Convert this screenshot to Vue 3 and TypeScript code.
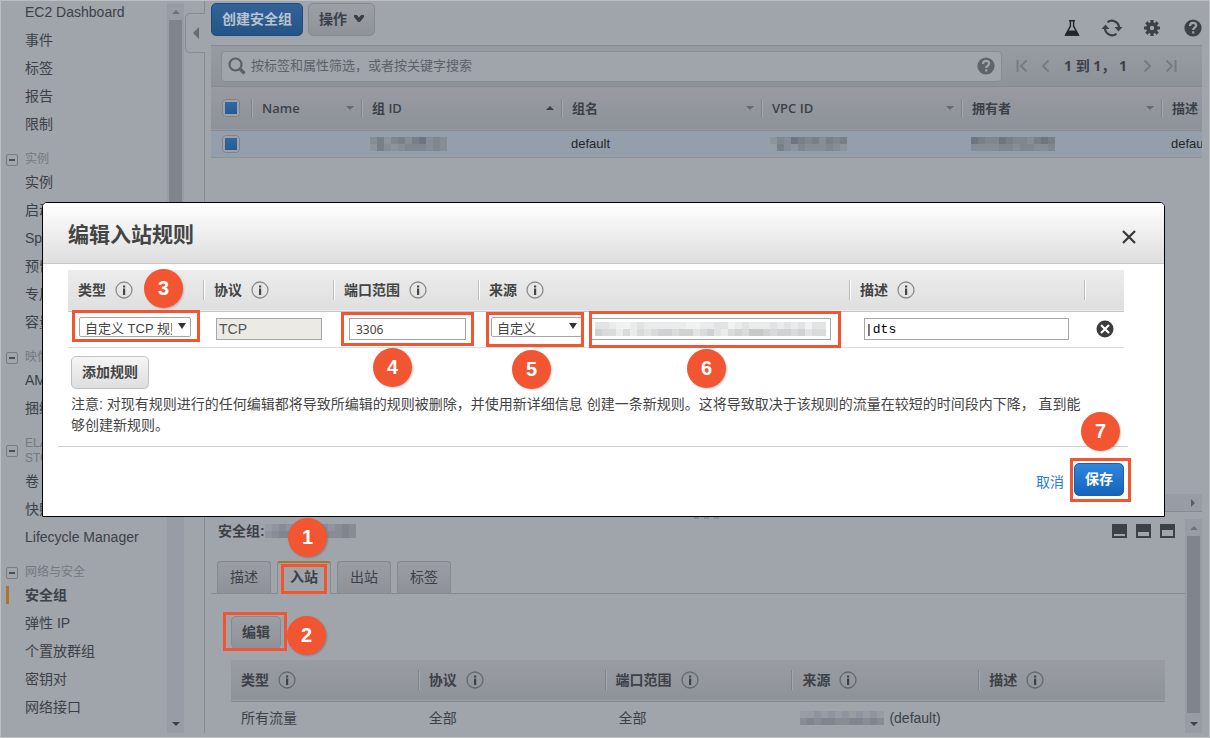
<script setup lang="ts">
import { h, ref, type FunctionalComponent } from 'vue'

interface NavGroup { title: string; items: string[] }

const topItems: string[] = ['EC2 Dashboard', '事件', '标签', '报告', '限制']
const groups: NavGroup[] = [
  { title: '实例', items: ['实例', '启动模板', 'Spot 请求', '预留实例', '专用主机', '容量预留'] },
  { title: '映像', items: ['AMI', '捆绑任务'] },
  { title: 'ELASTIC BLOCK STORE', items: ['卷', '快照', 'Lifecycle Manager'] },
  { title: '网络与安全', items: ['安全组', '弹性 IP', '个置放群组', '密钥对', '网络接口'] },
]
const activeItem = ref('安全组')

const columns = [
  { label: 'Name', sort: 'down' },
  { label: '组 ID', sort: 'up' },
  { label: '组名', sort: 'down' },
  { label: 'VPC ID', sort: 'down' },
  { label: '拥有者', sort: 'down' },
  { label: '描述', sort: '' },
]
const tabs = ['描述', '入站', '出站', '标签']
const activeTab = ref('入站')
const ruleColumns = ['类型', '协议', '端口范围', '来源', '描述']

const port = ref('3306')
const description = ref('|dts')

/* Redacted values: each digit picks a shade, each cell is a 7px square. */
const darkShades = ['#949ea9', '#8c959f', '#858e98', '#7e8790', '#777f89', '#6e7480']
const greyShades = ['#a0a4ab', '#989ca3', '#9094a0', '#888d94', '#81868e', '#797e88']
const lightShades = ['#f2f2f2', '#eaebeb', '#e2e3e4', '#d9dada', '#d0d1d2', '#c7c7c8']

const Mosaic: FunctionalComponent<{ rows: string[]; shades: string[] }> = (props) => {
  const width = props.rows[0].length * 7
  const height = props.rows.length * 7
  return h(
    'svg',
    { width, height, viewBox: `0 0 ${width} ${height}`, 'shape-rendering': 'crispEdges', 'aria-hidden': 'true' },
    props.rows.flatMap((row, y) =>
      [...row].map((c, x) => h('rect', { x: x * 7, y: y * 7, width: 7, height: 7, fill: props.shades[Number(c)] })),
    ),
  )
}
Mosaic.props = ['rows', 'shades']

const idRows = ['24134245232', '14212333232']
const vpcRows = ['13254342434', '04213222321']
const ownerRows = ['543354332454', '222233233223']
const detailRows = ['1232334332343', '2344333323343']
const sourceRows = ['112121212121', '343443344343']
const addressRows = ['221001211111100112201211121212022', '433131323443442342134355434434233']
</script>

<template>
  <div class="console">
    <svg class="defs" aria-hidden="true">
      <symbol id="i-info" viewBox="0 0 18 18">
        <circle cx="9" cy="9" r="8" fill="none" stroke="currentColor" stroke-opacity="0.55" stroke-width="1.3" />
        <path d="M8 4.500h2.200v2H8zM8 7.500h2.200v6.500H8z" fill="currentColor" />
      </symbol>
      <symbol id="i-help" viewBox="0 0 18 18">
        <circle cx="9" cy="9" r="8.6" fill="currentColor" />
        <path d="M6 7c0-4 6.200-4 6.200-.6 0 2.200-3 2.200-3 4.600" fill="none" stroke="#a0a4ab" stroke-width="2.2" />
        <path d="M8.100 12.300h2.200v2.200H8.100z" fill="#a0a4ab" />
      </symbol>
    </svg>

    <nav class="sidebar">
      <a v-for="item in topItems" :key="item" href="#" class="nav-item">{{ item }}</a>
      <template v-for="g in groups" :key="g.title">
        <h2 class="nav-title">
          <button class="fold" type="button" :aria-label="'折叠 ' + g.title"></button>
          <span>{{ g.title }}</span>
        </h2>
        <a
          v-for="item in g.items"
          :key="item"
          href="#"
          class="nav-item"
          :class="{ active: item === activeItem }"
          @click.prevent="activeItem = item"
        >{{ item }}</a>
      </template>
    </nav>

    <div class="scroll side-scroll">
      <i class="tri up dim"></i>
      <div class="thumb"></div>
      <i class="tri down"></i>
    </div>

    <div class="gutter">
      <button class="collapse" type="button" aria-label="收起导航"><i class="tri left"></i></button>
    </div>

    <main class="main">
      <section class="upper">
        <header class="toolbar">
          <button class="btn primary" type="button">创建安全组</button>
          <button class="btn" type="button">
            操作
            <svg width="10" height="8" viewBox="0 0 10 8"><path d="M0 0h3l2 2.500L7 0h3v2L6 7H4L0 2z" fill="#3c4148" /></svg>
          </button>
          <div class="tools">
            <button class="tool" type="button" aria-label="实验">
              <svg width="18" height="18" viewBox="0 0 18 18">
                <path d="M6 1.700h6M7.400 1.700v5.500L2.600 16h12.800L10.600 7.200V1.700" fill="none" stroke="#23272c" stroke-width="1.400" />
                <path d="M4.700 11.500h8.600l3 5.200H1.700z" fill="#23272c" />
              </svg>
            </button>
            <button class="tool" type="button" aria-label="刷新">
              <svg width="22" height="18" viewBox="0 0 22 18">
                <path d="M6.500 3.200A7.200 7.200 0 0 1 18 9M15.500 14.800A7.200 7.200 0 0 1 4 9" fill="none" stroke="#3c4148" stroke-width="2.300" />
                <path d="M13.500 8h8l-4 4.500zM.5 10h8L4.500 5.500z" fill="#3c4148" />
              </svg>
            </button>
            <button class="tool" type="button" aria-label="设置">
              <svg width="18" height="18" viewBox="0 0 18 18">
                <circle cx="9" cy="9" r="4" fill="none" stroke="#3c4148" stroke-width="3.600" />
                <path d="M9 1v3M9 14v3M1 9h3M14 9h3M3.300 3.300l2.200 2.200M12.500 12.500l2.200 2.200M3.300 14.700l2.200-2.200M12.500 5.500l2.200-2.200" stroke="#3c4148" stroke-width="3.200" />
              </svg>
            </button>
            <button class="tool" type="button" aria-label="帮助">
              <svg width="18" height="18"><use href="#i-help" /></svg>
            </button>
          </div>
        </header>

        <div class="filter">
          <div class="search">
            <svg width="18" height="18" viewBox="0 0 18 18">
              <circle cx="7.500" cy="7.500" r="6" fill="none" stroke="#5c6168" stroke-width="2.200" />
              <path d="M11.500 11.500l5 5" stroke="#5c6168" stroke-width="3.200" />
            </svg>
            <input type="text" aria-label="筛选" placeholder="按标签和属性筛选，或者按关键字搜索" />
            <svg class="search-help" width="18" height="18"><use href="#i-help" /></svg>
          </div>
          <div class="pager">
            <button type="button" aria-label="第一页"><svg width="12" height="14" viewBox="0 0 12 14"><path d="M1.500 1v12M10.500 1.500L5 7l5.500 5.500" /></svg></button>
            <button type="button" aria-label="上一页"><svg width="12" height="14" viewBox="0 0 12 14"><path d="M8.500 1.500L3 7l5.500 5.500" /></svg></button>
            <strong>1 到 1， 1</strong>
            <button type="button" aria-label="下一页"><svg width="12" height="14" viewBox="0 0 12 14"><path d="M3.500 1.500L9 7l-5.500 5.500" /></svg></button>
            <button type="button" aria-label="最后一页"><svg width="12" height="14" viewBox="0 0 12 14"><path d="M10.500 1v12M1.500 1.500L7 7l-5.500 5.500" /></svg></button>
          </div>
        </div>

        <div class="grid-wrap">
          <table class="grid">
            <colgroup>
              <col class="c-check" /><col class="c-name" /><col /><col /><col /><col /><col />
            </colgroup>
            <thead>
              <tr>
                <th><input class="check" type="checkbox" aria-label="全选" checked /></th>
                <th v-for="c in columns" :key="c.label">
                  <div class="th">{{ c.label }}<i v-if="c.sort" class="tri" :class="[c.sort, { dim: c.sort === 'down' }]"></i></div>
                </th>
              </tr>
            </thead>
            <tbody>
              <tr>
                <td><input class="check" type="checkbox" aria-label="选择 default" checked /></td>
                <td></td>
                <td><Mosaic :rows="idRows" :shades="darkShades" /></td>
                <td>default</td>
                <td><Mosaic :rows="vpcRows" :shades="darkShades" /></td>
                <td><Mosaic :rows="ownerRows" :shades="darkShades" /></td>
                <td>default VPC security group</td>
              </tr>
            </tbody>
          </table>
        </div>
        <div class="hscroll"><i class="tri right"></i></div>
      </section>

      <section class="details">
        <div class="dots"><i></i><i></i><i></i></div>
        <div class="detail-body">
          <div class="detail-head">
            <strong>安全组:</strong>
            <Mosaic :rows="detailRows" :shades="greyShades" />
            <div class="panes">
              <button class="pane low" type="button" aria-label="最小化"></button>
              <button class="pane mid" type="button" aria-label="一半"></button>
              <button class="pane full" type="button" aria-label="最大化"></button>
            </div>
            <span class="badge b1">1</span>
          </div>
          <div class="tabs">
            <button
              v-for="t in tabs"
              :key="t"
              type="button"
              class="tab"
              :class="{ active: t === activeTab }"
              @click="activeTab = t"
            >{{ t }}<span v-if="t === '入站'" class="frame f1"></span></button>
          </div>
          <div class="edit-wrap">
            <button class="btn edit" type="button">编辑</button>
            <span class="frame f2"></span>
            <span class="badge b2">2</span>
          </div>
          <table class="rules">
            <thead>
              <tr>
                <th v-for="c in ruleColumns" :key="c"><div class="rule-th">{{ c }}<svg width="18" height="18"><use href="#i-info" /></svg></div></th>
              </tr>
            </thead>
            <tbody>
              <tr>
                <td>所有流量</td>
                <td>全部</td>
                <td class="port-cell">全部</td>
                <td class="source-cell"><div><Mosaic :rows="sourceRows" :shades="greyShades" /><span>(default)</span></div></td>
                <td></td>
              </tr>
            </tbody>
          </table>
        </div>
        <div class="scroll">
          <i class="tri up dim"></i>
          <div class="thumb long"></div>
          <i class="tri down"></i>
        </div>
      </section>
    </main>

    <div class="modal" role="dialog" aria-labelledby="modal-title">
      <header class="modal-head">
        <h1 id="modal-title">编辑入站规则</h1>
        <button class="close" type="button" aria-label="关闭">
          <svg width="14" height="14" viewBox="0 0 14 14"><path d="M1 1l12 12M13 1L1 13" stroke="#3a3a3a" stroke-width="2.300" /></svg>
        </button>
      </header>
      <div class="modal-body">
        <table class="edit-rules">
          <colgroup>
            <col class="w-type" /><col class="w-proto" /><col class="w-port" /><col /><col class="w-desc" /><col class="w-del" />
          </colgroup>
          <thead>
            <tr>
              <th v-for="(c, i) in ruleColumns" :id="'col-' + i" :key="c">
                <div class="rule-th">{{ c }}<svg width="18" height="18"><use href="#i-info" /></svg></div>
                <span v-if="i === 0" class="badge b3">3</span>
              </th>
              <th><div class="rule-th"></div></th>
            </tr>
          </thead>
          <tbody>
            <tr>
              <td>
                <div class="field type">
                  <select aria-labelledby="col-0"><option>自定义 TCP 规则</option></select>
                  <i class="caret"></i>
                  <span class="frame f3"></span>
                </div>
              </td>
              <td><div class="field proto"><input type="text" value="TCP" disabled aria-labelledby="col-1" /></div></td>
              <td>
                <div class="field port">
                  <input v-model="port" type="text" aria-labelledby="col-2" />
                  <span class="frame f4"></span>
                  <span class="badge b4">4</span>
                </div>
              </td>
              <td>
                <div class="sources">
                  <div class="field kind">
                    <select aria-labelledby="col-3"><option>自定义</option></select>
                    <i class="caret"></i>
                    <span class="frame f5"></span>
                    <span class="badge b5">5</span>
                  </div>
                  <div class="field address">
                    <input type="text" aria-labelledby="col-3" />
                    <Mosaic class="masked" :rows="addressRows" :shades="lightShades" />
                    <span class="frame f6"></span>
                    <span class="badge b6">6</span>
                  </div>
                </div>
              </td>
              <td><div class="field desc"><input v-model="description" type="text" aria-labelledby="col-4" /></div></td>
              <td>
                <button class="delete" type="button" aria-label="删除规则">
                  <svg width="18" height="18" viewBox="0 0 18 18">
                    <circle cx="9" cy="9" r="8.500" fill="#3c3c3c" />
                    <path d="M5 5l8 8M13 5l-8 8" stroke="#fff" stroke-width="2.200" />
                  </svg>
                </button>
              </td>
            </tr>
          </tbody>
        </table>
        <button class="btn bright add" type="button">添加规则</button>
        <p class="note">注意: 对现有规则进行的任何编辑都将导致所编辑的规则被删除，并使用新详细信息 创建一条新规则。这将导致取决于该规则的流量在较短的时间段内下降， 直到能够创建新规则。</p>
        <footer class="modal-foot">
          <a href="#">取消</a>
          <div class="save-wrap">
            <button class="btn save" type="button">保存</button>
            <span class="frame f7"></span>
            <span class="badge b7">7</span>
          </div>
        </footer>
      </div>
    </div>
  </div>
</template>

<style>
body { margin: 0; }
</style>

<style scoped>
* { box-sizing: border-box; }

.console {
  position: relative;
  display: flex;
  height: 100vh;
  border: 1px solid #bcbebf;
  padding-right: 7px;
  overflow: hidden;
  background: #a0a4ab;
  color: #3c4148;
  font: 14px/20px "Liberation Sans", "Noto Sans CJK SC", sans-serif;
}
.defs { position: absolute; width: 0; height: 0; }
button, input, select { margin: 0; font: inherit; color: inherit; }
button { padding: 0; border: 0; background: none; }
svg { display: block; flex: none; }
table { border-collapse: collapse; border-spacing: 0; table-layout: fixed; }
th, td { padding: 0; text-align: left; }

.tri { width: 0; height: 0; border: 4px solid transparent; flex: none; }
.tri.up { border-top: 0; border-bottom-color: #3c4148; }
.tri.down { border-bottom: 0; border-top-color: #3c4148; }
.tri.left { border: 6px solid transparent; border-left: 0; border-right-color: #666b72; }
.tri.right { border-right: 0; border-left-color: #5a5f66; }
.tri.up.dim { border-bottom-color: #6f747b; }
.tri.down.dim { border-top-color: #666b72; }

/* sidebar */
.sidebar { width: 166px; flex: none; margin-top: -3px; }
.nav-item {
  display: block;
  padding-left: 24px;
  line-height: 28px;
  color: inherit;
  text-decoration: none;
  white-space: nowrap;
}
.nav-item.active { font-weight: bold; position: relative; }
.nav-item.active::before {
  content: "";
  position: absolute;
  left: 5px;
  top: 5px;
  width: 3px;
  height: 18px;
  background: #ab7430;
}
.nav-title {
  display: flex;
  align-items: center;
  gap: 6px;
  margin: 0;
  padding: 14px 40px 1px 5px;
  font-size: 12px;
  font-weight: normal;
  line-height: 15px;
  color: #747980;
}
.fold {
  display: flex;
  align-items: center;
  justify-content: center;
  flex: none;
  width: 12px;
  height: 12px;
  border: 1px solid #777c83;
  border-radius: 2px;
}
.fold::before { content: ""; width: 6px; height: 2px; background: #4b5057; }
.nav-title span { margin-left: 1px; }

.scroll {
  display: flex;
  flex-direction: column;
  align-items: center;
  flex: none;
  width: 17px;
  padding: 7px 0;
  background: #989ca4;
}
.side-scroll { margin: 2px 0 4px; }
.thumb { width: 13px; height: 380px; margin: 6px 0 auto; background: #80848b; }
.thumb.long { flex: 1; margin: 6px 0 9px; }

.gutter { flex: none; width: 21px; border-right: 1px solid #868a91; margin-bottom: 4px; }
.collapse {
  display: flex;
  align-items: center;
  padding-left: 7px;
  width: 20px;
  height: 40px;
  margin: 12px 0 0 1px;
  border: 1px solid #868a91;
  border-right: 0;
  border-radius: 5px 0 0 5px;
  background: #a0a4ab;
}

/* main area */
.main { flex: 1; min-width: 0; display: flex; flex-direction: column; padding-left: 6px; }
.upper { flex: 1; min-height: 0; display: flex; flex-direction: column; border-bottom: 1px solid #868a91; }
.toolbar {
  display: flex;
  gap: 5px;
  height: 45px;
  padding-top: 2px;
  border-bottom: 1px solid #868a91;
}
.btn {
  display: flex;
  align-items: center;
  justify-content: center;
  height: 33px;
  padding: 0 10px 1px;
  border: 1px solid #858990;
  border-radius: 5px;
  background: linear-gradient(#9c9fa5, #8f9399);
  font-weight: 600;
}
.btn svg { margin-left: 7px; }
.btn.primary {
  border-color: #1f4c80;
  background: linear-gradient(#326399, #255385);
  color: #b9c3cf;
  font-weight: bold;
}
.tools { display: flex; align-items: center; margin-left: auto; padding-top: 8px; height: 42px; }
.tool { display: flex; justify-content: center; width: 40px; }
.tool:last-child { justify-content: flex-end; width: 30px; }

.filter {
  display: flex;
  align-items: center;
  flex: none;
  height: 41px;
  padding: 0 25px 0 10px;
  border-bottom: 1px solid #868a91;
  background: linear-gradient(#979ba2, #8e9299);
}
.search {
  display: flex;
  align-items: center;
  gap: 5px;
  flex: 1;
  height: 31px;
  padding: 0 6px;
  border: 1px solid #878b92;
  border-radius: 4px;
  background: #a0a4ab;
}
.search input { flex: 1; min-width: 0; padding: 0; border: 0; outline: 0; background: none; font-size: 13px; }
.search input::placeholder { color: #5c6168; opacity: 1; }
.search-help { color: #5f646b; }
.pager { display: flex; align-items: center; margin-left: 14px; }
.pager button + button { margin-left: 12px; }
.pager path { fill: none; stroke: #777c83; stroke-width: 2; }
.pager strong { margin: 0 14px 0 12px; white-space: pre; font-family: "Noto Sans", "Noto Sans CJK SC", sans-serif; }

.grid-wrap { flex: 1; overflow: hidden; }
.grid { width: 1150px; font-size: 13px; }
.c-check { width: 40px; }
.c-name { width: 110px; }
.grid thead tr { height: 43px; background: linear-gradient(#989ca2, #8d9298); border-bottom: 1px solid #868a91; }
.grid tbody tr { height: 27px; background: #949fab; border-bottom: 1px solid #8b929b; color: #23272c; }
.grid td { white-space: nowrap; }
.grid td:nth-child(3), .grid td:nth-child(5) { padding-left: 9px; }
.grid td:nth-child(4), .grid td:nth-child(6), .grid td:nth-child(7) { padding-left: 10px; }
.th {
  display: flex;
  align-items: center;
  justify-content: space-between;
  height: 19px;
  padding: 0 7px 0 10px;
  border-left: 1px solid #7f848b;
  box-shadow: inset 1px 0 #a3a7ad;
  font-family: "Open Sans", "Noto Sans CJK SC", sans-serif;
  font-weight: 600;
}
.check {
  appearance: none;
  display: block;
  width: 18px;
  height: 18px;
  margin-left: 11px;
  border: 1px solid #80858c;
  border-radius: 4px;
  background: #9ea2a8;
}
.check:checked { background: linear-gradient(#2f69a3, #275b92) center / 12px 12px no-repeat #9ea2a8; }
.hscroll {
  display: flex;
  align-items: center;
  justify-content: flex-end;
  flex: none;
  height: 17px;
  padding-right: 7px;
  background: #989ca4;
}

/* details */
.details { position: relative; display: flex; flex: none; height: auto; }
.dots { position: absolute; top: 3px; left: 483px; display: flex; gap: 5px; }
.dots i { width: 5px; height: 4px; background: #8b8f96; }
.detail-body { flex: 1; min-width: 0; padding-top: 9px; }
.details > .scroll { margin: 7px 0 4px; }
.detail-head { position: relative; display: flex; align-items: center; height: 20px; padding: 0 10px 0 7px; font-size: 14px; }
.panes { display: flex; gap: 9px; margin-left: auto; }
.pane { width: 15px; height: 14px; border: 2px solid #3c4148; background: #a0a4ab; }
.pane.low { border-top-width: 10px; }
.pane.mid { border-top-width: 8px; }
.pane.full { border-top-width: 6px; }
.tabs { display: flex; gap: 6px; height: 33px; margin-top: 20px; padding-left: 6px; border-bottom: 1px solid #858990; }
.tab {
  position: relative;
  width: 54px;
  height: 32px;
  padding-bottom: 2px;
  border: 1px solid #858990;
  border-bottom: 0;
  border-radius: 3px 3px 0 0;
  background: linear-gradient(#9a9ea4, #8f9399);
}
.tab.active { height: 33px; padding-bottom: 4px; background: #a0a4ab; border-top: 2px solid #ab7430; font-weight: 600; }
.edit-wrap { position: relative; display: flex; margin: 22px 0 0 20px; }
.rules { width: calc(100% - 40px); margin: 11px 0 0 20px; }
.rules thead tr { height: 41px; background: linear-gradient(#999da3, #8e9299); border-bottom: 1px solid #858990; }
.rules tbody tr { height: 36px; }
.rule-th {
  display: flex;
  align-items: center;
  gap: 9px;
  height: 20px;
  padding-left: 10px;
  border-left: 1px solid #7f848b;
  box-shadow: inset 1px 0 #a3a7ad;
  font-weight: 600;
}
th:first-child .rule-th { border: 0; box-shadow: none; }
.rules td { padding: 0 0 2px 11px; }
.rules td:first-child { padding-left: 10px; }
.rules td.port-cell { padding-left: 14px; }
.rules td.source-cell { padding-left: 9px; }
.source-cell div { display: flex; align-items: center; gap: 5px; }

/* modal */
.modal {
  position: absolute;
  top: 201px;
  left: 41px;
  right: 44px;
  border: 1px solid #000;
  border-radius: 5px 5px 0 0;
  background: #fff;
  color: #444;
}
.modal-head {
  display: flex;
  align-items: center;
  justify-content: space-between;
  height: 61px;
  padding: 4px 28px 0 25px;
  border-bottom: 1px solid #c6c6c6;
  border-radius: 4px 4px 0 0;
  background: linear-gradient(#fff, #dedede);
}
.modal-head h1 { margin: 0; font-size: 21px; line-height: 30px; font-weight: bold; }
.close { width: 14px; height: 14px; margin-top: 3px; }
.modal-body { padding: 6px 40px 20px 25px; }
.edit-rules { width: 100%; }
.w-type { width: 135px; }
.w-proto { width: 130px; }
.w-port { width: 145px; }
.w-desc { width: 235px; }
.w-del { width: 40px; }
.edit-rules thead tr { height: 41px; background: linear-gradient(#ececec, #dfdfdf); border-bottom: 1px solid #c4c4c4; }
.edit-rules tbody tr { height: 36px; border-bottom: 1px solid #dcdcdc; }
.edit-rules th { position: relative; }
.edit-rules .rule-th { border-color: #bdbdbd; box-shadow: inset 1px 0 #fff; }
.field { position: relative; height: 22px; }
.field input, .field select {
  display: block;
  width: 100%;
  height: 22px;
  border: 1px solid #a6a6a6;
  border-radius: 0;
  background: #fff;
  outline: 0;
}
.field select { appearance: none; height: 20px; padding: 3px 18px 0 5px; border-radius: 2px; font-size: 13px; line-height: 15px; }
.caret {
  position: absolute;
  right: 5px;
  top: 6px;
  border: 4px solid transparent;
  border-top: 6px solid #333;
  border-bottom: 0;
}
.type { width: 112px; margin-left: 11px; height: 24px; }
.proto { width: 106px; margin-left: 13px; }
.field.proto input { padding: 0 2px; background: #ebebe4; color: #545454; }
.port { width: 117px; margin-left: 16px; }
.port input { padding: 0 6px; font: 12px/16px "Noto Sans", sans-serif; }
.sources { display: flex; align-items: center; gap: 8px; padding: 0 18px 0 13px; }
.kind { width: 91px; height: 24px; }
.address { flex: 1; }
.masked { position: absolute; left: 5px; top: 4px; }
.desc { width: 205px; margin-left: 15px; }
.desc input { padding: 0; font: 13px/18px "Liberation Mono", monospace; color: #000; }
.delete { display: block; margin-left: 12px; }

.btn.bright { border-color: #c2c2c2; background: linear-gradient(#f5f5f5, #dedede); }
.add { margin: 8px 0 0 3px; }
.note { margin: 5px 34px 0 3px; line-height: 21px; }
.modal-foot {
  display: flex;
  align-items: center;
  justify-content: flex-end;
  gap: 10px;
  margin: 10px -4px 0 -10px;
  padding: 16px 4px 0 0;
  border-top: 1px solid #ccc;
}
.modal-foot a { padding-top: 6px; color: #2a7ad6; text-decoration: none; }
.save-wrap { position: relative; }
.btn.save { border-color: #1a5fae; background: linear-gradient(#2f86de, #1464bb); color: #fff; font-weight: bold; }

/* step markers */
.frame { position: absolute; border: 3px solid #f15532; pointer-events: none; }
.badge {
  position: absolute;
  z-index: 2;
  width: 39px;
  height: 39px;
  border-radius: 50%;
  background: #f15532;
  box-shadow: 1px 1px 2px rgba(0, 0, 0, 0.2);
  color: #fff;
  font: bold 20px/39px "Liberation Sans", sans-serif;
  text-align: center;
}
.f1 { inset: 1px 3px 0; }
.f2 { top: -4px; left: -8px; width: 64px; height: 39px; }
.f3 { inset: -7px -9px -1px -7px; }
.f4 { inset: -6px -8px; }
.f5 { inset: -5px -2px -6px -5px; }
.f6 { inset: -7px -10px -8px -1px; }
.f7 { inset: -5px -7px -6px -4px; }
.b1 { left: 77px; top: -3px; }
.b2 { left: 56px; top: 0; }
.b3 { left: 76px; top: -1px; }
.b4 { left: 24px; top: 30px; }
.b5 { left: 21px; top: 33px; }
.b6 { left: 97px; top: 31px; }
.b7 { left: 7px; top: -51px; }
</style>
